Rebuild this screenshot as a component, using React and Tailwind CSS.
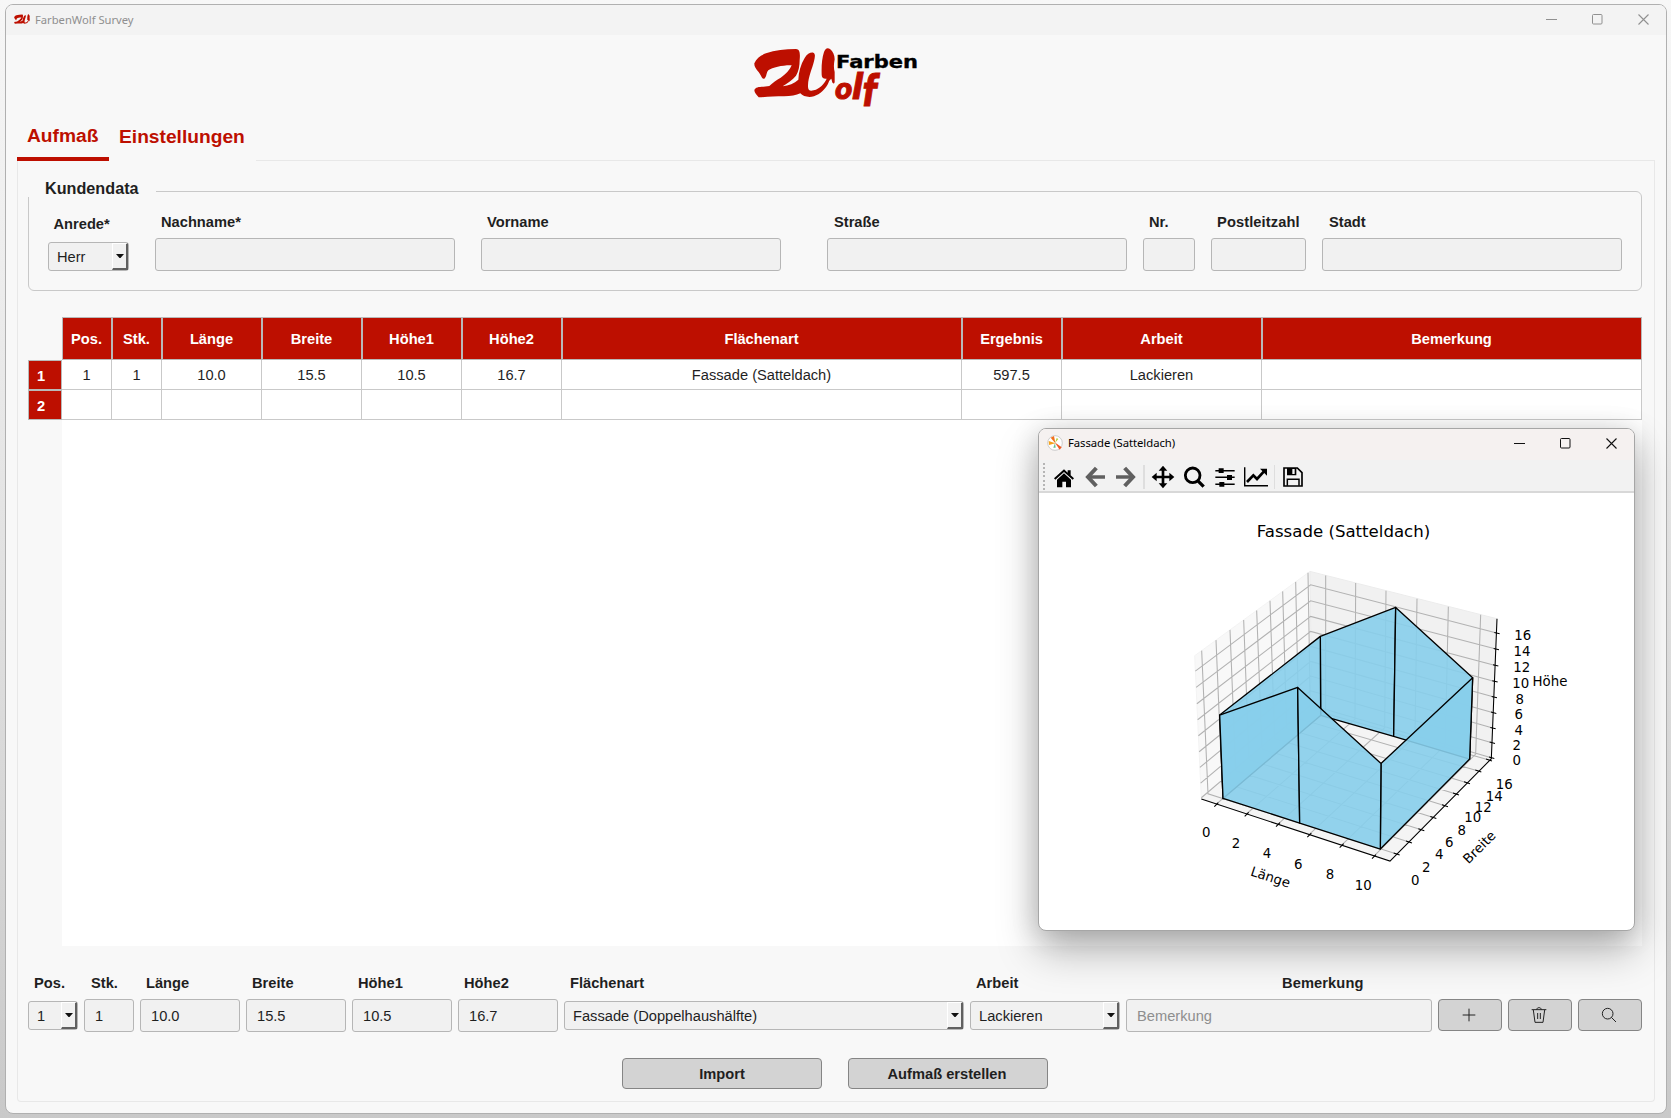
import React from "react";

const W_SHAPE =
  "M73 100 C80 84 92 76 108 70 C135 60 165 57 198 57 C209 58 211 68 209 90 C209 108 206 124 198 137 C188 150 172 160 158 169 C176 167 193 160 205 149 C206 126 212 104 224 84 C231 71 243 66 250 68 C257 71 255 82 252 94 C246 118 235 140 234 166 C233 182 240 184 251 181 C270 176 284 160 290 146 C280 147 275 143 275 134 C274 108 276 84 282 66 C286 54 293 52 300 57 C309 64 314 76 314 88 C311 104 311 114 314 126 L314 157 C312 163 307 161 306 154 L304 146 C300 150 298 150 296 157 C288 177 270 193 252 199 C236 203 219 200 211 190 C199 196 182 199 162 199 C136 199 110 201 86 202 C80 194 73 189 73 180 C76 172 86 170 100 170 L118 168 C128 158 140 150 152 143 C168 133 180 118 185 106 C160 105 128 112 115 121 C108 128 111 140 103 146 C98 148 95 142 92 136 C86 122 72 116 73 100 Z";

const sans = "font-['Liberation_Sans',Arial,sans-serif]";

function Logo() {
  return (
    <svg width="210" height="85" viewBox="0 15 630 255" className="mr-[2px] shrink-0">
      <path d={W_SHAPE} fill="#bd0f00" />
      <text x="318" y="113" textLength="246" lengthAdjust="spacingAndGlyphs" fontFamily="DejaVu Sans" fontWeight="700" fontSize="51" fill="#000" stroke="#000" strokeWidth="1">
        Farben
      </text>
      <g fill="#bd0f00" stroke="#bd0f00" strokeWidth="3" fontFamily="DejaVu Sans" fontWeight="700" fontStyle="italic">
        <text x="314" y="208" fontSize="84" textLength="53" lengthAdjust="spacingAndGlyphs">o</text>
        <text x="365" y="208" fontSize="104" textLength="34" lengthAdjust="spacingAndGlyphs">l</text>
        <text x="397" y="228" fontSize="130" textLength="43" lengthAdjust="spacingAndGlyphs">f</text>
      </g>
    </svg>
  );
}

function Combo({ value, className }) {
  return (
    <div className={`flex h-[29px] items-center rounded-[3px] border border-[#b6b6b6] bg-[#f1f1f1] pl-2 ${className}`}>
      <span className="flex-1 whitespace-nowrap">{value}</span>
      <span className="flex h-[27px] w-[16px] items-center justify-center border-t border-r-2 border-b-2 border-l border-t-white border-r-[#606060] border-b-[#606060] border-l-white bg-[#f1f1f1]">
        <svg width="8" height="4" viewBox="0 0 8 4"><path d="M0 0H8L4.5 4H3.5Z" fill="#111" /></svg>
      </span>
    </div>
  );
}

function Input({ value, placeholder, className }) {
  return (
    <div className={`flex h-[33px] items-center rounded-[3px] border border-[#b6b6b6] bg-[#f1f1f1] pl-[10px] ${className}`}>
      {value}
      {placeholder && <span className="text-[#8e8e8e]">{placeholder}</span>}
    </div>
  );
}

function Field({ label, combo, className = "", labelClass = "ml-[6px]", children }) {
  return (
    <div className={`flex flex-col ${combo ? "gap-2" : "gap-[6px]"} ${className}`}>
      <span className={`h-5 leading-5 font-bold whitespace-nowrap ${labelClass}`}>{label}</span>
      {children}
    </div>
  );
}

const columns = ["Pos.", "Stk.", "Länge", "Breite", "Höhe1", "Höhe2", "Flächenart", "Ergebnis", "Arbeit", "Bemerkung"];
const rows = [
  ["1", "1", "10.0", "15.5", "10.5", "16.7", "Fassade (Satteldach)", "597.5", "Lackieren", ""],
  ["", "", "", "", "", "", "", "", "", ""],
];
const gridCols = "grid grid-cols-[50px_50px_100px_100px_100px_100px_400px_100px_200px_380px]";

function Table() {
  return (
    <div className="mt-[26px] ml-[10px] flex h-[629px] w-[1614px]">
      <div className="flex w-[34px] flex-col pt-[43px] font-bold text-white">
        {["1", "2"].map((n) => (
          <div key={n} className="flex h-[30px] items-center border border-[#b9b9b9] bg-[#bd0f00] pl-2 pt-px">{n}</div>
        ))}
      </div>
      <div className="w-[1580px] bg-white">
        <div className={gridCols}>
          {columns.map((c) => (
            <div key={c} className="flex h-[43px] items-center justify-center border border-[#b9b9b9] bg-[#bd0f00] pr-px font-bold text-white">{c}</div>
          ))}
        </div>
        {rows.map((r, i) => (
          <div key={i} className={gridCols}>
            {r.map((c, j) => (
              <div key={j} className="flex h-[30px] items-center justify-center border-r border-b border-[#c9c9c9]">{c}</div>
            ))}
          </div>
        ))}
      </div>
    </div>
  );
}

function ToolButton({ children }) {
  return (
    <div className="flex h-full w-[31px] shrink-0 items-center justify-center">
      <svg width="24" height="24" viewBox="0 0 72 72">{children}</svg>
    </div>
  );
}

function PlotToolbar() {
  return (
    <div className="flex h-[33px] shrink-0 items-center border-b-2 border-[#d8d8d8] bg-[#f2f2f2] pt-[2px] pl-1">
      <div className="mr-[3px] flex h-[27px] w-[2px] flex-col justify-between">
        {[0, 1, 2, 3, 4, 5, 6].map((i) => <span key={i} className="h-[2px] w-[2px] bg-[#b5b5b5]" />)}
      </div>
      <ToolButton>
        <path d="M6 40L36 13L47 23V16H56V31L66 40L62 44L36 21L10 44Z" fill="#000" />
        <path d="M36 25L57 44V67H42V50H31V67H15V44Z" fill="#000" />
      </ToolButton>
      <ToolButton>
        <path d="M37 9L12 36L37 63" transform="translate(3 0)" fill="none" stroke="#606060" strokeWidth="12" />
        <path d="M14 36H66" stroke="#606060" strokeWidth="11" />
      </ToolButton>
      <ToolButton>
        <path d="M35 9L60 36L35 63" transform="translate(-3 0)" fill="none" stroke="#606060" strokeWidth="12" />
        <path d="M6 36H58" stroke="#606060" strokeWidth="11" />
      </ToolButton>
      <span className="mr-[3px] ml-[2px] h-6 w-[1.5px] bg-[#dedede]" />
      <ToolButton>
        <path d="M36 2L49 17H40V32H55V23L70 36L55 49V40H40V55H49L36 70L23 55H32V40H17V49L2 36L17 23V32H32V17H23Z" fill="#000" />
      </ToolButton>
      <ToolButton>
        <circle cx="32" cy="31" r="22" fill="none" stroke="#000" strokeWidth="8.5" />
        <path d="M47 47L65 65" stroke="#000" strokeWidth="10" />
      </ToolButton>
      <ToolButton>
        <path d="M7 17H65M7 37H65M7 58H65" stroke="#000" strokeWidth="4.5" />
        <path d="M17 10H32V24H17ZM42 30H57V45H42ZM19 51H34V65H19Z" fill="#000" />
      </ToolButton>
      <ToolButton>
        <path d="M2 7V62H72" fill="none" stroke="#000" strokeWidth="4.5" />
        <path d="M9 51L28 31L39 42L60 19" fill="none" stroke="#000" strokeWidth="8" />
        <path d="M48 11H69V32Z" fill="#000" />
      </ToolButton>
      <span className="mx-[2px] h-6 w-[1.5px] bg-[#dedede]" />
      <ToolButton>
        <path d="M9 9H49L63 23V63H9Z" fill="none" stroke="#000" strokeWidth="5" />
        <path d="M18 9H46V31H18ZM34 12V27H41V12Z" fill="#000" fillRule="evenodd" />
        <path d="M19 62V43H54V62" fill="none" stroke="#000" strokeWidth="4.5" />
      </ToolButton>
    </div>
  );
}

const backX = [[437, 481], [525, 506], [614, 532], [705, 558], [796, 584], [887, 611]];
const topX = [[437, 75], [527, 98], [618, 121], [711, 145], [805, 169], [902, 193]];
const frontX = [[109, 761], [200, 790], [294, 821], [388, 852], [485, 884], [582, 917]];
const leftTopY = [65, 108, 150, 191, 230, 270, 308, 347, 384].map((x) => [x, 316 - ((x - 44) * 253) / 346]);
const leftY = [84, 126, 167, 207, 246, 284, 320, 356, 391].map((x) => [x, 730 - ((x - 84) * 254) / 307]);
const rightY = [[650, 911], [687, 875], [724, 838], [760, 801], [795, 766], [828, 731], [861, 697], [895, 662], [927, 629]];
const leftZ = [742, 698, 651, 604, 556, 508, 460, 411, 362].map((y) => [64 - ((742 - y) * 18) / 380, y]);
const cornerZ = [464, 421, 377, 333, 288, 243, 198, 151, 103].map((y) => [392, y]);
const rightZ = [622, 577, 533, 487, 440, 393, 345, 296, 248].map((y, i) => [934 + i * 2, y]);

const tickLabels = [
  [79, 846, "0"], [168, 878, "2"], [261, 907, "4"], [355, 941, "6"], [450, 970, "8"], [550, 1003, "10"],
  [706, 988, "0"], [739, 949, "2"], [778, 912, "4"], [808, 874, "6"], [845, 838, "8"], [878, 801, "10"], [910, 769, "12"], [943, 736, "14"], [973, 700, "16"],
  [1010, 630, "0"], [1010, 584, "2"], [1016, 539, "4"], [1016, 491, "6"], [1019, 446, "8"], [1022, 398, "10"], [1025, 350, "12"], [1026, 302, "14"], [1028, 254, "16"],
];

const faces = [
  "422,495 421,258 647,171 641,558",
  "641,558 647,171 878,382 869,626",
  "129,744 119,494 421,258 422,495",
  "601,896 603,639 878,382 869,626",
  "129,744 119,494 353,411 359,818",
  "359,818 353,411 603,639 601,896",
];

const seg = (pts) => pts.map((p, i) => `${i ? "L" : "M"}${p[0]} ${p[1]}`).join("");
const tick = ([x, y], dx, dy) => `M${x - dx} ${y - dy}L${x + dx} ${y + dy}`;

function Plot() {
  const grid = [
    ...frontX.map((p, i) => seg([p, backX[i], topX[i]])),
    ...rightY.map((p, i) => seg([p, leftY[i], leftTopY[i]])),
    ...leftZ.map((p, i) => seg([p, cornerZ[i], rightZ[i]])),
  ].join("");
  const ticks = [
    ...frontX.map(([x, y]) => tick([x, y + 2], 6, -6)),
    ...rightY.map((p) => tick(p, 9, 3)),
    ...rightZ.map(([x, y]) => tick([x + 1, y], 8, 2)),
  ].join("");
  return (
    <svg width="595" height="437" viewBox="0 0 595 437" fontFamily="DejaVu Sans" className="shrink-0">
      <text x="304.5" y="43.7" fontSize="16.6" textAnchor="middle">Fassade (Satteldach)</text>
      <g transform="translate(141 57.4) scale(0.33333)">
        <path d="M44 316L390 63L396 469L64 746Z" fill="#f8f8f8" stroke="#f3f3f3" strokeWidth="3" />
        <path d="M390 63L951 205L934 625L396 469Z" fill="#f1f1f1" stroke="#ececec" strokeWidth="3" />
        <path d="M64 746L396 469L934 625L630 932Z" fill="#f4f4f4" />
        <path d={grid} fill="none" stroke="#b2b2b2" strokeWidth="3.2" />
        <path d="M64 746L630 932L934 625L951 205" fill="none" stroke="#000" strokeWidth="3.2" />
        <path d={ticks} fill="none" stroke="#000" strokeWidth="3.2" />
        {faces.map((p) => (
          <polygon key={p} points={p} fill="#87ceeb" fillOpacity="0.9" stroke="#000" strokeWidth="4" strokeLinejoin="round" />
        ))}
        <g fontSize="40" textAnchor="middle" fill="#000">
          {tickLabels.map(([x, y, t], i) => <text key={i} x={x} y={y + 15}>{t}</text>)}
          <text transform="translate(271 982) rotate(18)" y="12">Länge</text>
          <text transform="translate(898 890) rotate(-45)" y="14">Breite</text>
          <text x="1110" y="407">Höhe</text>
        </g>
      </g>
    </svg>
  );
}

function WindowControls({ color, className }) {
  return (
    <div className={`flex items-center gap-[35px] ${className}`}>
      <svg width="11" height="11" viewBox="0 0 11 11"><path d="M0 5.5H11" stroke={color} /></svg>
      <svg width="11" height="11" viewBox="0 0 11 11"><rect x=".5" y=".5" width="9.5" height="9.5" rx="1" fill="none" stroke={color} /></svg>
      <svg width="11" height="11" viewBox="0 0 11 11"><path d="M.5 .5L10.5 10.5M10.5 .5L.5 10.5" stroke={color} strokeWidth="1.1" /></svg>
    </div>
  );
}

function PlotWindow() {
  return (
    <div className="absolute top-[428px] left-[1038px] flex h-[503px] w-[597px] flex-col overflow-hidden rounded-lg border border-[#a6a6a6] bg-white shadow-[0_20px_42px_rgba(0,0,0,0.27),0_4px_28px_rgba(0,0,0,0.16)]">
      <div className="flex h-[31px] shrink-0 items-center bg-[#f5f1f0] pl-2 pb-[2px]">
        <svg width="16" height="16" viewBox="0 0 48 48" className="mr-[5px] mb-px">
          <circle cx="24" cy="24" r="22" fill="#fff" stroke="#c4c4c4" strokeWidth="2.5" />
          <path d="M25 25L11 8L21 3Z" fill="#f2701b" />
          <path d="M25 25L6 30L5 18Z" fill="#f5a21b" />
          <path d="M23 22L38 44L44 37Z" fill="#ee5a24" />
          <path d="M24 24L29 9L34 12Z" fill="#b7cf3a" />
          <path d="M24 24L19 38L26 38Z" fill="#67c08a" />
        </svg>
        <span className="flex-1 font-['Noto_Sans','Open_Sans',sans-serif] text-[11.3px] tracking-[-0.05px] text-black">Fassade (Satteldach)</span>
        <WindowControls color="#111" className="mr-[17px]" />
      </div>
      <PlotToolbar />
      <Plot />
    </div>
  );
}

function IconButton({ children }) {
  return (
    <div className="mt-[26px] flex h-8 w-16 items-center justify-center rounded-[4px] border border-[#858585] bg-[#d3d3d3] pr-[2px]">
      <svg width="16" height="16" viewBox="0 0 48 48" fill="none" stroke="#222" strokeWidth="3">{children}</svg>
    </div>
  );
}

export default function App() {
  return (
    <div className={`relative h-[1118px] w-[1671px] overflow-hidden bg-linear-to-b from-[#f7f7f7] via-[#e2e2e2] to-[#c9c9c9] pt-1 pl-[5px] text-[14.67px] text-[#1f1f1f] ${sans}`}>
      <div className="flex h-[1110px] w-[1662px] flex-col overflow-hidden rounded-lg border border-[#b0b0b0] bg-[#f8f8f8]">
        <div className="flex h-[30px] shrink-0 items-center bg-[#f3f3f3] pl-2">
          <svg width="16" height="10" viewBox="70 50 248 155" preserveAspectRatio="none" className="mr-[5px] mb-[2px]"><path d={W_SHAPE} fill="#bd0f00" /></svg>
          <span className="flex-1 font-['Noto_Sans','Open_Sans',sans-serif] text-[11.2px] text-[#8f8f8f]">FarbenWolf Survey</span>
          <WindowControls color="#909090" className="mr-[17px] mb-[2px]" />
        </div>
        <div className="flex h-[88px] shrink-0 justify-center"><Logo /></div>
        <div className="ml-[11px] flex h-[38px] w-[1638px] shrink-0 text-[19.2px] font-bold text-[#bd0f00]">
          <div className="w-[92px] border-b-4 border-[#bd0f00] pt-px pl-[10px] leading-[24px]">Aufmaß</div>
          <div className="w-[147px] pt-[2px] pl-[10px] leading-[24px]">Einstellungen</div>
          <div className="flex-1 border-b border-[#e8e8e8]" />
        </div>
        <div className="ml-[11px] flex h-[941px] w-[1638px] shrink-0 flex-col rounded-b-[4px] border-x border-b border-[#e8e8e8]">
          <div className="relative mt-[30px] ml-[10px] flex h-[100px] w-[1614px] shrink-0 rounded-[6px] border border-[#c9c9c9] pt-5 pl-[19px]">
            <div className="absolute -top-[16px] -left-px flex h-[21px] w-[128px] items-center bg-[#f8f8f8] pt-[2px] pl-[17px] text-[16.2px] leading-5 font-bold">Kundendata</div>
            <Field label="Anrede*" combo labelClass="ml-[5.5px]" className="w-[81px] pt-[2px]"><Combo value="Herr" className="w-[81px]" /></Field>
            <Field label="Nachname*" className="ml-[26px]"><Input className="w-[300px]" /></Field>
            <Field label="Vorname" className="ml-[26px]"><Input className="w-[300px]" /></Field>
            <Field label="Straße" labelClass="ml-[7px]" className="ml-[46px]"><Input className="w-[300px]" /></Field>
            <Field label="Nr." className="ml-[16px]"><Input className="w-[52px]" /></Field>
            <Field label="Postleitzahl" labelClass="ml-[6px] tracking-[0.1px]" className="ml-[16px] w-[95px]"><Input className="w-[95px]" /></Field>
            <Field label="Stadt" labelClass="ml-[7px]" className="ml-[16px]"><Input className="w-[300px]" /></Field>
          </div>
          <Table />
          <div className="mt-[27px] ml-[10px] flex gap-[6px]">
            <Field label="Pos." combo><Combo value="1" className="w-[50px]" /></Field>
            <Field label="Stk." labelClass="ml-[7px]"><Input value="1" className="w-[50px]" /></Field>
            <Field label="Länge"><Input value="10.0" className="w-[100px]" /></Field>
            <Field label="Breite"><Input value="15.5" className="w-[100px]" /></Field>
            <Field label="Höhe1"><Input value="10.5" className="w-[100px]" /></Field>
            <Field label="Höhe2"><Input value="16.7" className="w-[100px]" /></Field>
            <Field label="Flächenart" combo><Combo value="Fassade (Doppelhaushälfte)" className="w-[400px]" /></Field>
            <Field label="Arbeit" combo><Combo value="Lackieren" className="w-[150px]" /></Field>
            <Field label="Bemerkung" labelClass="relative z-10 ml-[156px] tracking-[0.1px]"><Input placeholder="Bemerkung" className="w-[306px]" /></Field>
            <IconButton><path d="M24 5V43M5 24H43" strokeWidth="3" /></IconButton>
            <IconButton>
              <path d="M2 8H46M7 9L12 46H36L41 9M17 8C17 0 31 0 31 8M20 18V36M28 18V36" />
            </IconButton>
            <IconButton><circle cx="20" cy="20" r="16" /><path d="M31 31L45 45" /></IconButton>
          </div>
          <div className="mt-[26px] mr-[2px] flex justify-center gap-[26px] font-bold">
            <div className="flex h-[31px] w-[200px] items-center justify-center rounded-[4px] border border-[#858585] bg-[#d3d3d3]">Import</div>
            <div className="flex h-[31px] w-[200px] items-center justify-center rounded-[4px] border border-[#858585] bg-[#d3d3d3] pr-[2px]">Aufmaß erstellen</div>
          </div>
        </div>
      </div>
      <PlotWindow />
    </div>
  );
}
